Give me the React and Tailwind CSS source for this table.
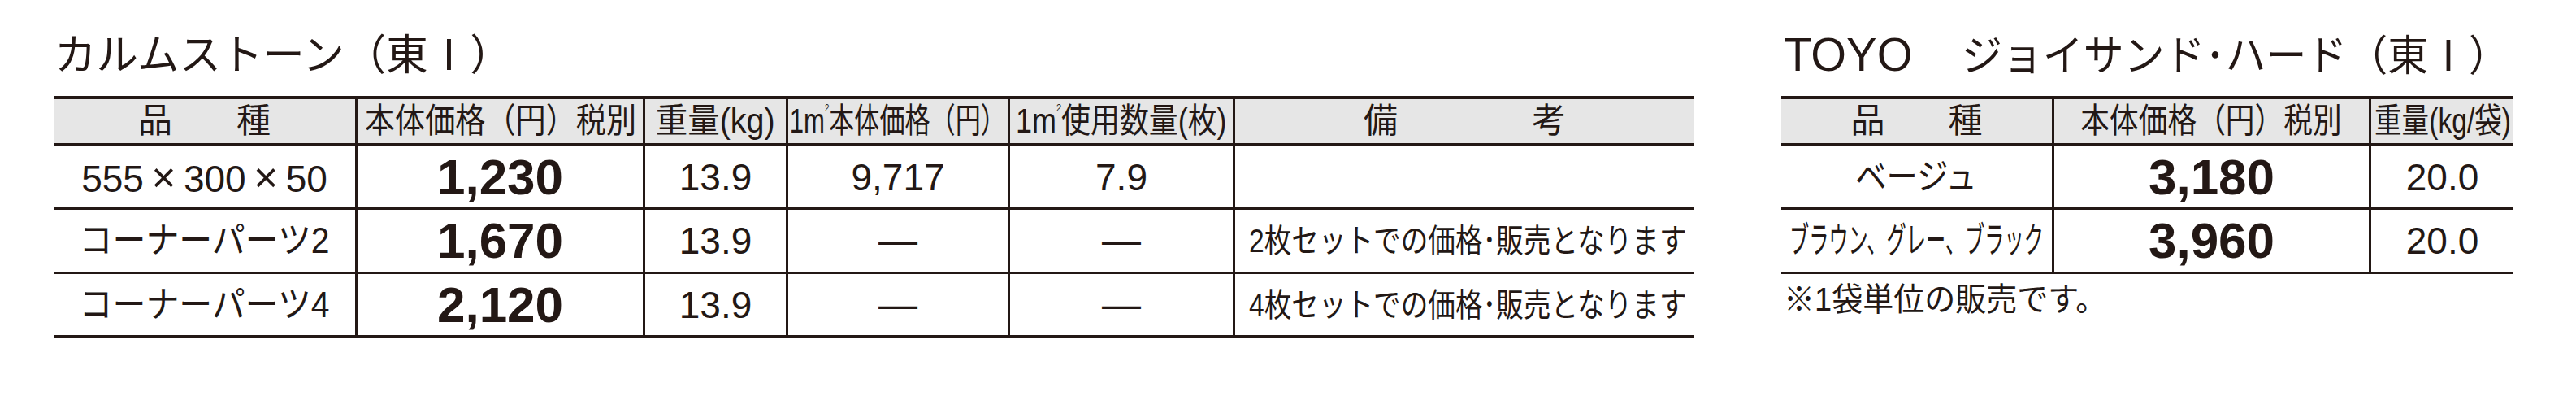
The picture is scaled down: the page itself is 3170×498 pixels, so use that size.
const B = "border-[#231815]";

function T({ className = "", children }) {
  return (
    <span className={"inline-block whitespace-nowrap leading-none " + className}>
      {children}
    </span>
  );
}

function Sq() {
  return (
    <>
      m<span className="inline-block text-[13px] leading-none align-top -translate-y-[2px]">2</span>
    </>
  );
}

function X() {
  return <span className="inline-block w-[49px] text-center text-[52px] leading-none">×</span>;
}

function Dash() {
  return <T className="text-[48px]">—</T>;
}

function LeftTable() {
  const rows = [
    {
      name: (
        <T className="text-[46px]">
          555<X />300<X />50
        </T>
      ),
      price: "1,230",
      w: "13.9",
      m2: <T className="text-[46px]">9,717</T>,
      n: <T className="text-[46px]">7.9</T>,
      note: null,
      h: "h-[78px] border-b-[3px]",
    },
    {
      name: <T className="text-[44px] scale-x-[0.93]">コーナーパーツ2</T>,
      price: "1,670",
      w: "13.9",
      m2: <Dash />,
      n: <Dash />,
      note: "2枚セットでの価格･販売となります",
      h: "h-[79px] border-b-[3px]",
    },
    {
      name: <T className="text-[44px] scale-x-[0.93]">コーナーパーツ4</T>,
      price: "2,120",
      w: "13.9",
      m2: <Dash />,
      n: <Dash />,
      note: "4枚セットでの価格･販売となります",
      h: "h-[75px]",
    },
  ];
  const c = "shrink-0 flex items-center justify-center border-r-[3px] " + B;
  return (
    <div className={"border-t-4 border-b-4 " + B}>
      <div className={"flex h-[58px] bg-[#e6e6e6] border-b-4 " + B}>
        <div className={"w-[374px] gap-[79px] " + c}>
          <T className="text-[42px]">品</T>
          <T className="text-[42px]">種</T>
        </div>
        <div className={"w-[354px] " + c}>
          <T className="text-[42px] scale-x-[0.884]">本体価格（円）税別</T>
        </div>
        <div className={"w-[176px] " + c}>
          <T className="text-[42px] scale-x-[0.94]">重量(kg)</T>
        </div>
        <div className={"w-[273px] " + c}>
          <T className="text-[42px] scale-x-[0.74]">
            1<Sq />本体価格（円）
          </T>
        </div>
        <div className={"w-[277px] " + c}>
          <T className="text-[42px] scale-x-[0.855]">
            1<Sq />使用数量(枚)
          </T>
        </div>
        <div className="flex-1 min-w-0 flex items-center justify-center gap-[165px]">
          <T className="text-[42px]">備</T>
          <T className="text-[42px]">考</T>
        </div>
      </div>
      {rows.map((r, i) => (
        <div key={i} className={"flex " + r.h + " " + B}>
          <div className={"w-[374px] " + c}>{r.name}</div>
          <div className={"w-[354px] " + c}>
            <T className="text-[62px] font-bold">{r.price}</T>
          </div>
          <div className={"w-[176px] " + c}>
            <T className="text-[46px]">{r.w}</T>
          </div>
          <div className={"w-[273px] " + c}>{r.m2}</div>
          <div className={"w-[277px] " + c}>{r.n}</div>
          <div className="flex-1 min-w-0 flex items-center pl-[17px]">
            {r.note && (
              <T className="text-[40px] origin-left scale-x-[0.84]">{r.note}</T>
            )}
          </div>
        </div>
      ))}
    </div>
  );
}

function RightTable() {
  const c = "shrink-0 flex items-center justify-center border-r-[3px] " + B;
  const rows = [
    {
      name: <T className="text-[44px] scale-x-[0.87]">ベージュ</T>,
      price: "3,180",
      h: "h-[78px] border-b-[3px]",
    },
    {
      name: <T className="text-[44px] scale-x-[0.55]">ブラウン、グレー、ブラック</T>,
      price: "3,960",
      h: "h-[76px]",
    },
  ];
  return (
    <div className={"border-t-4 border-b-[3px] " + B}>
      <div className={"flex h-[58px] bg-[#e6e6e6] border-b-4 " + B}>
        <div className={"w-[336px] gap-[78px] " + c}>
          <T className="text-[42px]">品</T>
          <T className="text-[42px]">種</T>
        </div>
        <div className={"w-[390px] " + c}>
          <T className="text-[42px] scale-x-[0.85]">本体価格（円）税別</T>
        </div>
        <div className="flex-1 min-w-0 flex items-center justify-center">
          <T className="text-[42px] scale-x-[0.8]">重量(kg/袋)</T>
        </div>
      </div>
      {rows.map((r, i) => (
        <div key={i} className={"flex " + r.h + " " + B}>
          <div className={"w-[336px] " + c}>{r.name}</div>
          <div className={"w-[390px] " + c}>
            <T className="text-[62px] font-bold">{r.price}</T>
          </div>
          <div className="flex-1 min-w-0 flex items-center justify-center">
            <T className="text-[46px]">20.0</T>
          </div>
        </div>
      ))}
    </div>
  );
}

export default function App() {
  return (
    <div className="w-[3170px] h-[498px] bg-white text-[#231815] flex items-start pl-[66px] font-['Liberation_Sans','Noto_Sans_CJK_JP',sans-serif]">
      <div className="w-[2019px] shrink-0">
        <div className="h-[118px] pt-[38px] pl-[1px]">
          <T className="text-[52px] origin-left scale-x-[0.99] font-['Noto_Sans_CJK_JP',sans-serif]">
            カルムストーン（東Ⅰ）
          </T>
        </div>
        <LeftTable />
      </div>
      <div className="w-[901px] shrink-0 ml-[107px]">
        <div className="h-[118px] pt-[38px] pl-[3px] flex items-baseline">
          <T className="text-[58px] origin-left scale-x-[0.97]">TOYO</T>
          <T className="ml-[56px] text-[52px] origin-left scale-x-[0.96] font-['Noto_Sans_CJK_JP',sans-serif]">
            ジョイサンド･ハード（東Ⅰ）
          </T>
        </div>
        <RightTable />
        <div className="pt-[11px] pl-[3px]">
          <T className="text-[40px] origin-left scale-x-[0.95]">※1袋単位の販売です。</T>
        </div>
      </div>
    </div>
  );
}
